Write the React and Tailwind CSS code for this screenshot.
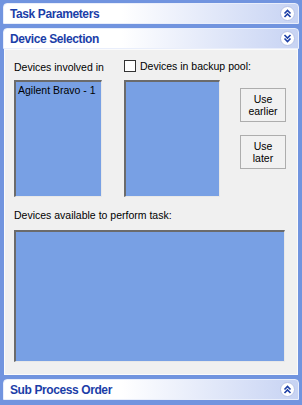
const font = { fontFamily: '"Liberation Sans", Arial, sans-serif' };

function Chevrons({ up }) {
  return (
    <div className="flex h-[15px] w-[15px] items-center justify-center rounded-full border border-[#b7c3e6] bg-white">
      <svg width="9" height="9" viewBox="0 0 9 9" fill="none" stroke="#1d3fa6" strokeWidth="1.6">
        {up ? (
          <>
            <path d="M1.5 4.5 L4.5 1.5 L7.5 4.5" />
            <path d="M1.5 8 L4.5 5 L7.5 8" />
          </>
        ) : (
          <>
            <path d="M1.5 1 L4.5 4 L7.5 1" />
            <path d="M1.5 4.5 L4.5 7.5 L7.5 4.5" />
          </>
        )}
      </svg>
    </div>
  );
}

function Header({ title, up }) {
  return (
    <div className="flex h-[21px] items-center justify-between rounded-t-[4px] border border-[#e9eefb] bg-gradient-to-r from-white from-40% to-[#c7d3f3] pl-[6px] pr-[3px]">
      <span className="text-[12px] font-bold tracking-[-0.4px] text-[#1b3ea8]">{title}</span>
      <Chevrons up={up} />
    </div>
  );
}

function ListBox({ className, children }) {
  return (
    <div className={`whitespace-nowrap border-l-2 border-t-2 border-r border-b border-l-[#6b6b6b] border-t-[#6b6b6b] border-r-[#e8e8e8] border-b-[#e8e8e8] bg-[#78a0e4] px-[2px] py-[1px] text-[10.5px] text-black ${className}`}>
      {children}
    </div>
  );
}

function Btn({ children }) {
  return (
    <button className="flex h-[34px] w-[46px] flex-col items-center justify-center border border-[#adadad] bg-[#f1f1f1] text-[10.5px] leading-[12px] text-black">
      {children}
    </button>
  );
}

export default function App() {
  return (
    <div style={font} className="flex h-[405px] w-[302px] flex-col bg-[#f4f4f4]">
      <div className="flex flex-1 flex-col bg-[#7194df] px-[3px] pt-[3px] pb-[5px]">
        <Header title="Task Parameters" up />
        <div className="h-[4px]" />
        <Header title="Device Selection" />
        <div className="mx-[1px] flex flex-1 flex-col border border-[#fbfbfb] bg-[#f0f0f0] px-[9px] pt-[10px] pb-[12px] text-[10.5px] text-black">
          <div className="flex">
            <div className="flex w-[110px] flex-col">
              <div className="h-[20px] leading-[14px]">Devices involved in</div>
              <ListBox className="h-[117px] w-[88px]">Agilent Bravo - 1</ListBox>
            </div>
            <div className="flex w-[116px] flex-col">
              <div className="flex h-[20px] items-start gap-[4px]">
                <span className="block h-[12px] w-[12px] shrink-0 border border-[#333] bg-white" />
                <span className="leading-[13px] whitespace-nowrap">Devices in backup pool:</span>
              </div>
              <ListBox className="h-[117px] w-[96px]" />
            </div>
            <div className="flex flex-col gap-[13px] pt-[28px]">
              <Btn>
                <span>Use</span>
                <span>earlier</span>
              </Btn>
              <Btn>
                <span>Use</span>
                <span>later</span>
              </Btn>
            </div>
          </div>
          <div className="mt-[11px] h-[14px] leading-[14px]">Devices available to perform task:</div>
          <ListBox className="mt-[8px] flex-1 w-[271px]" />
        </div>
        <div className="h-[4px]" />
        <Header title="Sub Process Order" up />
      </div>
    </div>
  );
}
